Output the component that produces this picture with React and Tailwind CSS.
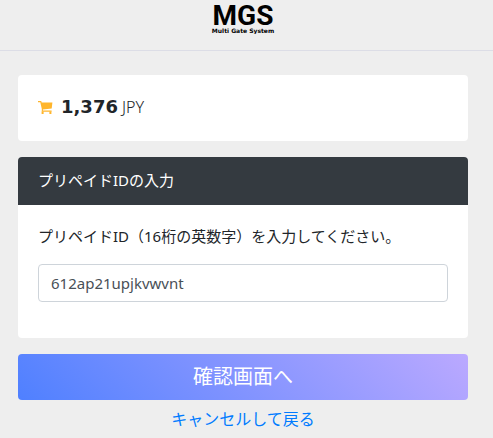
import React, { useState } from "react";

function Logo() {
  return (
    <svg viewBox="0 0 64 34" className="h-[34px] w-16" role="img" aria-label="MGS Multi Gate System">
      <text x="32" y="25" textAnchor="middle" className="fill-black font-[Roboto,sans-serif] text-[28px] font-bold">
        MGS
      </text>
      <text x="32" y="33" textAnchor="middle" className="fill-black font-['DejaVu_Sans',sans-serif] text-[6px] font-bold">
        Multi Gate System
      </text>
    </svg>
  );
}

function CartIcon() {
  return (
    <svg viewBox="0 0 15 15" className="size-[15px] fill-[#ffb52b]" aria-hidden="true">
      <path d="M0 1h3.2l.5 1.4H14.4L13.7 8.6 4.9 9.4v1.1H13.6v1.2H3.8V9L2.3 2.2H0z" />
      <path d="M3.6 11.4h2V14h-2zM11.4 11.4h2V14h-2z" />
    </svg>
  );
}

export default function App() {
  const [prepaidId, setPrepaidId] = useState("612ap21upjkvwvnt");

  return (
    <div className="min-h-screen bg-[#eeeeee] font-['Noto_Sans','Noto_Sans_CJK_JP',sans-serif] text-[#212529]">
      <header className="border-b border-[#dcdde6] pr-[7px]">
        <div className="flex h-[50px] justify-center">
          <Logo />
        </div>
      </header>
      <main className="mr-[7px] flex flex-col gap-4 px-[18px] pt-6">
        <section className="flex items-center gap-2 rounded bg-white px-5 pt-[19px] pb-[21px]">
          <CartIcon />
          <p className="flex items-baseline gap-1 text-base leading-[26px] font-light">
            <strong className="font-['DejaVu_Sans',sans-serif] text-lg leading-[26px] font-bold">1,376</strong>
            JPY
          </p>
        </section>

        <form id="prepaid" className="overflow-hidden rounded bg-white" onSubmit={(e) => e.preventDefault()}>
          <h1 className="bg-[#343a40] px-5 pt-[11px] pb-[13px] text-[15px] leading-6 text-white">プリペイドIDの入力</h1>
          <div className="px-5 pt-[19px] pb-9">
            <label htmlFor="prepaid-id" className="block text-[15px] leading-6">
              プリペイドID（16桁の英数字）を入力してください。
            </label>
            <input
              id="prepaid-id"
              type="text"
              value={prepaidId}
              onChange={(e) => setPrepaidId(e.target.value)}
              className="mt-4 block h-[38px] w-full rounded border border-[#ced4da] bg-white px-3 text-[15px] text-[#495057]"
            />
          </div>
        </form>

        <div className="flex flex-col gap-[7px] text-center">
          <button
            type="submit"
            form="prepaid"
            className="h-[46px] w-full rounded bg-linear-[45deg,#4f80ff,#bba9ff] text-xl text-white"
          >
            確認画面へ
          </button>
          <a href="#cancel" className="text-base leading-6 text-[#007bff]">
            キャンセルして戻る
          </a>
        </div>
      </main>
    </div>
  );
}
